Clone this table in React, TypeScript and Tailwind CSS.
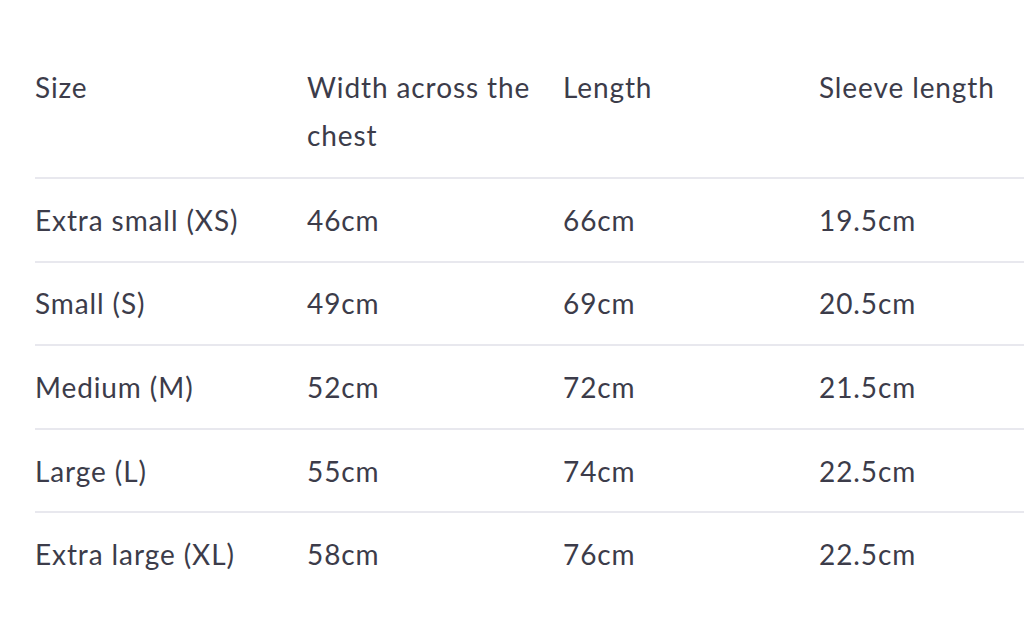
const rows = [
  ["Extra small (XS)", "46cm", "66cm", "19.5cm"],
  ["Small (S)", "49cm", "69cm", "20.5cm"],
  ["Medium (M)", "52cm", "72cm", "21.5cm"],
  ["Large (L)", "55cm", "74cm", "22.5cm"],
  ["Extra large (XL)", "58cm", "76cm", "22.5cm"],
];

export default function App() {
  return (
    <div className="w-[1024px] h-[624px] overflow-hidden bg-white pl-[35px] pt-[44px] font-['Lato',sans-serif] text-[28px] tracking-[0.9px] leading-[48px] text-[#3c3c4a]">
      <table className="table-fixed w-[1100px] border-collapse text-left">
        <colgroup>
          <col className="w-[272px]" />
          <col className="w-[256px]" />
          <col className="w-[256px]" />
          <col className="w-[316px]" />
        </colgroup>
        <thead>
          <tr className="border-b-2 border-[#e8e8ee]">
            <th className="font-normal align-top pt-[19px] pb-[18px] pr-[20px]">Size</th>
            <th className="font-normal align-top pt-[19px] pb-[18px] pr-[20px]">Width across the chest</th>
            <th className="font-normal align-top pt-[19px] pb-[18px] pr-[20px]">Length</th>
            <th className="font-normal align-top pt-[19px] pb-[18px] pr-[20px]">Sleeve length</th>
          </tr>
        </thead>
        <tbody>
          {rows.map((r, i) => (
            <tr key={r[0]} className={i < rows.length - 1 ? "border-b-2 border-[#e8e8ee]" : ""}>
              {r.map((c, j) => (
                <td key={j} className="py-[16.8px] pr-[20px]">
                  {c}
                </td>
              ))}
            </tr>
          ))}
        </tbody>
      </table>
    </div>
  );
}
